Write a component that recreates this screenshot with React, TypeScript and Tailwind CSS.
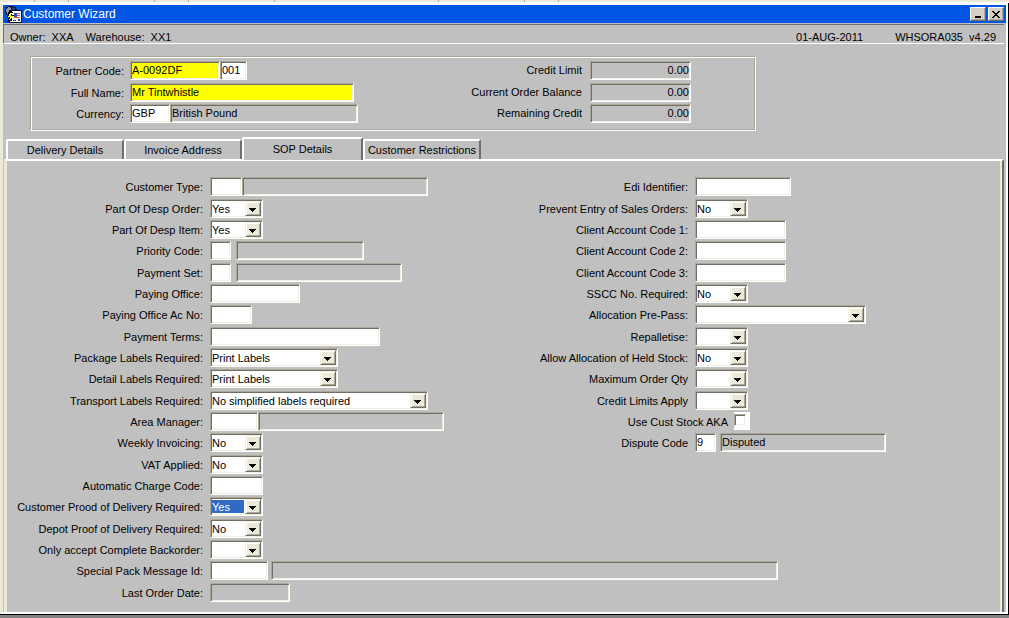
import React from "react";
import type { ReactNode } from "react";

const sunken =
  "border border-t-[#aca899] border-l-[#aca899] border-r-white border-b-white shadow-[inset_1px_1px_#716f64,inset_-1px_-1px_#f1efe2]";

type FieldProps = {
  id?: string;
  label?: string;
  value?: string;
  width: string;
  tone?: string;
};

const Field = ({ id, label, value = "", width, tone = "bg-white" }: FieldProps) => (
  <input
    id={id}
    aria-label={label}
    type="text"
    defaultValue={value}
    className={`h-[19px] shrink-0 rounded-none px-px pb-px outline-none ${sunken} ${tone} ${width}`}
  />
);

const Picker = ({ id, value = "", width, selected = false }: FieldProps & { selected?: boolean }) => (
  <div className={`relative h-[19px] shrink-0 bg-white py-0.5 pl-px ${sunken} ${width}`}>
    <select
      id={id}
      defaultValue={value}
      className={`block h-[13px] w-[calc(100%-18px)] appearance-none rounded-none pt-px leading-[12px] outline-none ${
        selected ? "bg-[#316ac5] text-white" : "bg-white"
      }`}
    >
      <option>{value}</option>
    </select>
    <span className="pointer-events-none absolute top-px right-px flex h-[15px] w-4 items-center justify-center border border-t-[#f1efe2] border-l-[#f1efe2] border-r-[#716f64] border-b-[#716f64] bg-[#ece9d8] pr-px shadow-[inset_1px_1px_white,inset_-1px_-1px_#aca899]">
      <svg width="7" height="4" viewBox="0 0 7 4" className="mt-0.5" shapeRendering="crispEdges">
        <path d="M0 0h7v1H6v1H5v1H4v1H3V3H2V2H1V1H0z" />
      </svg>
    </span>
  </div>
);

const Row = ({ id, label, children }: { id: string; label: string; children: ReactNode }) => (
  <div className="flex h-[21px] items-start nth-[3n+1]:mb-px">
    <label htmlFor={id} className="w-[194px] shrink-0 pt-1 pr-[7px] text-right whitespace-nowrap">
      {label}
    </label>
    {children}
  </div>
);

const Tab = ({ label, active = false }: { label: string; active?: boolean }) => (
  <button
    type="button"
    role="tab"
    aria-selected={active}
    className={`rounded-t-[2px] border-t-2 border-r-2 border-l-2 border-t-white border-l-white border-r-[#716f64] bg-[#c0c0c0] whitespace-nowrap ${
      active ? "z-10 -mb-px h-[23px] w-[121px]" : "h-5 w-[118px]"
    }`}
  >
    {label}
  </button>
);

const grey = "bg-[#c0c0c0]";
const yellow = "bg-[#ffff00]";

const WizardIcon = () => (
  <svg width="17" height="17" viewBox="0 0 17 17" shapeRendering="crispEdges" aria-hidden="true">
    <path fill="#101020" d="M3 0h6v1h2v2h1v2H8v4H5v2H3V9H1V7H0V3h1V1h2z" />
    <path fill="#9090a8" d="M3 1h2v1h1v2H4v2H3v2H2V6H1V3h1V2h1z" />
    <path fill="#203878" d="M6 1h3v1h1v2H7V2H6z" />
    <path fill="#101020" d="M6 4h11v13H4v-3h2z" />
    <path fill="#fff" d="M7 5h9v11H5v-1h2z" />
    <path fill="#3048b0" d="M9 7h3v4H9z" />
    <path fill="#e05050" d="M12 7h3v1h-3zM12 9h3v1h-3zM9 11h6v1H9z" />
    <path fill="#3048b0" d="M8 14h3v1H8zM13 13h2v2h-2z" />
    <path fill="#101020" d="M5 6h3L7 9h2l-5 7H2l2-5H2z" />
    <path fill="#ffff20" d="M5 7h2l-1 3h2l-4 5 1-4H3z" />
  </svg>
);

const sysButton =
  "flex h-[14px] w-4 items-center justify-center border border-t-white border-l-white border-r-[#716f64] border-b-[#716f64] bg-[#d4d0c8] shadow-[inset_-1px_-1px_#aca899]";

const TitleBar = () => (
  <header className="flex h-[18px] items-center bg-[#0055e5] pr-0.5 pl-0.5 text-white">
    <WizardIcon />
    <h1 className="ml-px flex-1 text-[12px] leading-4">Customer Wizard</h1>
    <div className="flex gap-0.5">
      <button type="button" aria-label="Minimize" className={sysButton}>
        <svg width="8" height="8" viewBox="0 0 8 8" shapeRendering="crispEdges">
          <path d="M1 6h6v2H1z" />
        </svg>
      </button>
      <button type="button" aria-label="Close" className={sysButton}>
        <svg width="8" height="7" viewBox="0 0 8 7" shapeRendering="crispEdges">
          <path d="M0 0h2v1h1v1h2V1h1V0h2v1H7v1H6v1H5v1h1v1h1v1h1v1H6V6H5V5H3v1H2v1H0V6h1V5h1V4h1V3H2V2H1V1H0z" />
        </svg>
      </button>
    </div>
  </header>
);

const partnerLabel = "w-[94px] shrink-0 pt-1 pr-1.5 text-right";

const PartnerPanel = () => (
  <section className="ml-[27px] w-[726px] border border-[#aca899] border-r-white border-b-white px-[5px] pt-1 pb-[7px] shadow-[inset_1px_1px_white,inset_-1px_-1px_#aca899]">
    <div className="flex">
      <div className="flex w-[400px] flex-col gap-0.5">
        <div className="mb-px flex">
          <label htmlFor="partner" className={partnerLabel}>Partner Code:</label>
          <Field id="partner" value="A-0092DF" width="w-[90px]" tone={yellow} />
          <Field label="Partner suffix" value="001" width="w-[27px]" />
        </div>
        <div className="flex">
          <label htmlFor="name" className={partnerLabel}>Full Name:</label>
          <Field id="name" value="Mr Tintwhistle" width="w-[224px]" tone={yellow} />
        </div>
        <div className="flex">
          <label htmlFor="currency" className={partnerLabel}>Currency:</label>
          <Field id="currency" value="GBP" width="w-10" />
          <Field label="Currency name" value="British Pound" width="w-[188px]" tone={grey} />
        </div>
      </div>
      <div className="flex flex-col gap-0.5">
        {["Credit Limit", "Current Order Balance", "Remaining Credit"].map((label) => (
          <div key={label} className="flex first:mb-px">
            <label htmlFor={label} className="w-[154px] shrink-0 pt-[3px] pr-2 text-right">
              {label}
            </label>
            <Field id={label} value="0.00" width="w-[101px]" tone="bg-[#c0c0c0] text-right" />
          </div>
        ))}
      </div>
    </div>
  </section>
);

const LeftColumn = () => (
  <div className="w-[485px] shrink-0">
    <Row id="type" label="Customer Type:">
      <Field id="type" width="w-8" />
      <Field label="Customer type name" width="w-[186px]" tone={grey} />
    </Row>
    <Row id="despOrder" label="Part Of Desp Order:">
      <Picker id="despOrder" value="Yes" width="w-[53px]" />
    </Row>
    <Row id="despItem" label="Part Of Desp Item:">
      <Picker id="despItem" value="Yes" width="w-[53px]" />
    </Row>
    <Row id="priority" label="Priority Code:">
      <Field id="priority" width="mr-[5px] w-[21px]" />
      <Field label="Priority name" width="w-[128px]" tone={grey} />
    </Row>
    <Row id="paymentSet" label="Payment Set:">
      <Field id="paymentSet" width="mr-[5px] w-[21px]" />
      <Field label="Payment set name" width="w-[166px]" tone={grey} />
    </Row>
    <Row id="office" label="Paying Office:">
      <Field id="office" width="w-[90px]" />
    </Row>
    <Row id="officeAc" label="Paying Office Ac No:">
      <Field id="officeAc" width="w-[42px]" />
    </Row>
    <Row id="terms" label="Payment Terms:">
      <Field id="terms" width="w-[170px]" />
    </Row>
    <Row id="package" label="Package Labels Required:">
      <Picker id="package" value="Print Labels" width="w-32" />
    </Row>
    <Row id="detail" label="Detail Labels Required:">
      <Picker id="detail" value="Print Labels" width="w-32" />
    </Row>
    <Row id="transport" label="Transport Labels Required:">
      <Picker id="transport" value="No simplified labels required" width="w-[218px]" />
    </Row>
    <Row id="area" label="Area Manager:">
      <Field id="area" width="w-12" />
      <Field label="Area manager name" width="w-[186px]" tone={grey} />
    </Row>
    <Row id="weekly" label="Weekly Invoicing:">
      <Picker id="weekly" value="No" width="w-[53px]" />
    </Row>
    <Row id="vat" label="VAT Applied:">
      <Picker id="vat" value="No" width="w-[53px]" />
    </Row>
    <Row id="charge" label="Automatic Charge Code:">
      <Field id="charge" width="w-[53px]" />
    </Row>
    <Row id="customerProof" label="Customer Prood of Delivery Required:">
      <Picker id="customerProof" value="Yes" width="w-[53px]" selected />
    </Row>
    <Row id="depotProof" label="Depot Proof of Delivery Required:">
      <Picker id="depotProof" value="No" width="w-[53px]" />
    </Row>
    <Row id="backorder" label="Only accept Complete Backorder:">
      <Picker id="backorder" width="w-[53px]" />
    </Row>
    <Row id="special" label="Special Pack Message Id:">
      <Field id="special" width="mr-[3px] w-[58px]" />
      <Field label="Special pack message" width="w-[507px]" tone={grey} />
    </Row>
    <Row id="lastOrder" label="Last Order Date:">
      <Field id="lastOrder" width="w-20" tone={grey} />
    </Row>
  </div>
);

const RightColumn = () => (
  <div className="w-[400px] shrink-0">
    <Row id="edi" label="Edi Identifier:">
      <Field id="edi" width="w-24" />
    </Row>
    <Row id="prevent" label="Prevent Entry of Sales Orders:">
      <Picker id="prevent" value="No" width="w-[53px]" />
    </Row>
    <Row id="client1" label="Client Account Code 1:">
      <Field id="client1" width="w-[91px]" />
    </Row>
    <Row id="client2" label="Client Account Code 2:">
      <Field id="client2" width="w-[91px]" />
    </Row>
    <Row id="client3" label="Client Account Code 3:">
      <Field id="client3" width="w-[91px]" />
    </Row>
    <Row id="sscc" label="SSCC No. Required:">
      <Picker id="sscc" value="No" width="w-[53px]" />
    </Row>
    <Row id="prepass" label="Allocation Pre-Pass:">
      <Picker id="prepass" width="w-[171px]" />
    </Row>
    <Row id="repalletise" label="Repalletise:">
      <Picker id="repalletise" width="w-[53px]" />
    </Row>
    <Row id="held" label="Allow Allocation of Held Stock:">
      <Picker id="held" value="No" width="w-[53px]" />
    </Row>
    <Row id="maxQty" label="Maximum Order Qty">
      <Picker id="maxQty" width="w-[53px]" />
    </Row>
    <Row id="limits" label="Credit Limits Apply">
      <Picker id="limits" width="w-[53px]" />
    </Row>
    <div className="flex h-[21px] items-start">
      <label htmlFor="aka" className="w-[233px] shrink-0 pt-1 pr-1.5 text-right">
        Use Cust Stock AKA
      </label>
      <span className="flex h-[18px] w-4 bg-white pt-0.5">
        <input id="aka" type="checkbox" className={`size-3 appearance-none bg-white ${sunken}`} />
      </span>
    </div>
    <Row id="dispute" label="Dispute Code">
      <Field id="dispute" value="9" width="mr-1 w-[21px]" />
      <Field label="Dispute name" value="Disputed" width="w-[166px]" tone={grey} />
    </Row>
  </div>
);

// widths of the toolbar cells that show above the window
const cells = ["w-[35px]", "w-[34px]", "w-[86px]", "w-[34px]", "w-[86px]", "w-[164px]", "w-[86px]", "w-[34px]"];

export default function App() {
  return (
    <div className="flex min-h-screen flex-col bg-[#848284] pb-[3px] font-['Liberation_Sans',Arial,sans-serif] text-[11px] leading-[13px] text-black">
      <div className="flex h-[3px] border-b border-white bg-[#ece9d8]">
        {cells.map((cell, i) => (
          <span key={i} className={`border-r border-[#aca899] ${cell}`} />
        ))}
      </div>
      <div className="flex flex-1 flex-col border-r border-b border-black">
        <div className="flex flex-1 flex-col border-t-2 border-r-2 border-b-2 border-l-[3px] border-t-white border-b-white border-l-[#ece9d8] border-r-white bg-[#c0c0c0]">
          <TitleBar />
          <div className="mt-px mr-0.5 flex h-5 items-end border-t border-b border-l border-t-[#716f64] border-b-white border-l-[#716f64] pr-2 pl-1.5 whitespace-pre">
            <span className="-mb-px flex flex-1 gap-3">
              <span>Owner:  XXA</span>
              <span>Warehouse:  XX1</span>
            </span>
            <span className="-mb-px mr-8">01-AUG-2011</span>
            <span className="-mb-px">WHSORA035  v4.29</span>
          </div>
          <main className="flex flex-1 flex-col pt-3">
            <PartnerPanel />
            <div role="tablist" className="mt-1.5 ml-[3px] flex items-end">
              <Tab label="Delivery Details" />
              <Tab label="Invoice Address" />
              <Tab label="SOP Details" active />
              <Tab label="Customer Restrictions" />
            </div>
            <form className="mr-0.5 ml-px flex flex-1 border-t-2 border-r-2 border-l-[3px] border-t-white border-r-[#716f64] border-l-[#ece9d8] pt-4 pb-0.5 pl-[9px] shadow-[inset_-2px_0_#ece9d8]">
              <LeftColumn />
              <RightColumn />
            </form>
          </main>
        </div>
      </div>
    </div>
  );
}
